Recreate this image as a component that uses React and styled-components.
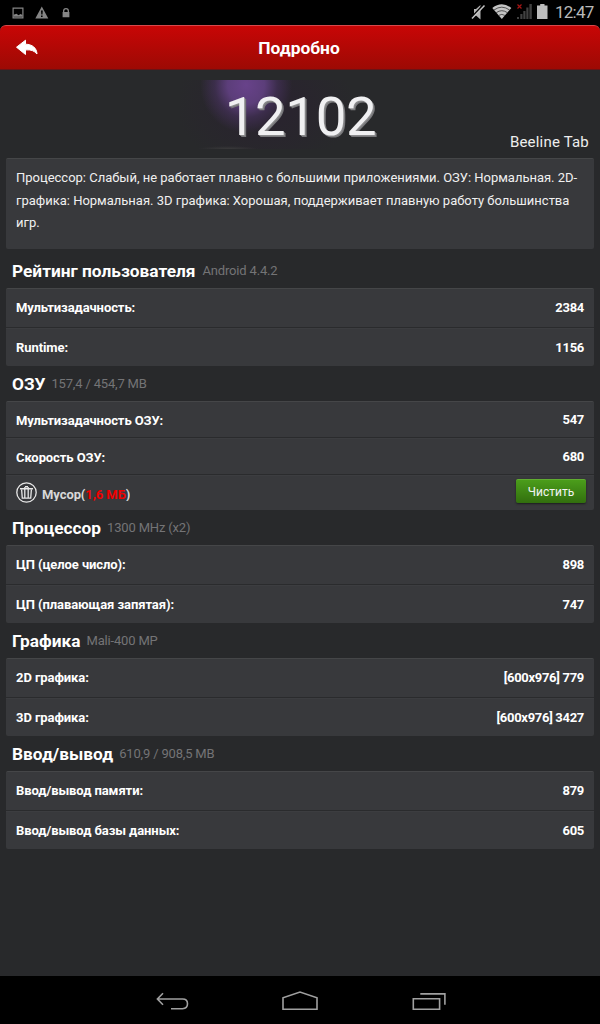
import styled, { createGlobalStyle } from 'styled-components';

const GlobalStyle = createGlobalStyle`
  * {
    box-sizing: border-box;
  }

  body {
    margin: 0;
    background: #28292b;
    font-family: Roboto, 'Noto Sans', sans-serif;
  }
`;

const Screen = styled.div`
  width: 600px;
  height: 1024px;
  display: flex;
  flex-direction: column;
  overflow: hidden;
  color: #fff;
  background: #28292b;
`;

const StatusBar = styled.div`
  height: 25px;
  flex: none;
  display: flex;
  justify-content: space-between;
  background: #000;
`;

const Clock = styled.span`
  font-size: 17px;
  line-height: 25px;
  letter-spacing: -0.75px;
  width: 45px;
  white-space: nowrap;
  color: #b9b9b9;
`;

const StatusRight = styled.div`
  display: flex;
`;

const HeaderWrap = styled.div`
  flex: none;
  background: #000;
`;

const Header = styled.header`
  height: 45px;
  display: grid;
  grid-template-columns: 54px 1fr 54px;
  align-items: center;
  border-top: 1px solid #d8484b;
  border-bottom: 1px solid #6b1315;
  border-radius: 6px 6px 0 0;
  background: linear-gradient(#c80606, #9d0a04);
`;

const Title = styled.h1`
  margin: 0;
  padding-right: 2px;
  font-size: 17.4px;
  font-weight: 700;
  text-align: center;
`;

const Main = styled.main`
  flex: 1;
  padding: 0 6px;
`;

const Hero = styled.div`
  height: 88px;
  padding-top: 10px;
  display: grid;
  grid-template-columns: 1fr 240px 1fr;
`;

const Glow = styled.div`
  height: 69px;
  text-align: center;
  background:
    radial-gradient(ellipse 30px 3px at 48px 69px, #3a3a3b, transparent),
    radial-gradient(ellipse 46px 48px at 66px 5px, #68428a 0, #5c3e7a 40%, rgba(75, 52, 100, 0.55) 68%, transparent 100%),
    radial-gradient(ellipse 90px 65px at 85px 25px, #29242e 30%, transparent 100%);
`;

const Score = styled.div`
  font-size: 54.5px;
  line-height: 72px;
  letter-spacing: -0.3px;
  padding-left: 1px;
  color: #f0f0f2;
  text-shadow: 1px 1px 0 #8b8b8d, 2px 2px 0 #77777a;
`;

const Device = styled.div`
  align-self: end;
  justify-self: end;
  padding-right: 5px;
  font-size: 15px;
  line-height: 18px;
  letter-spacing: 0.2px;
  margin-bottom: 7px;
  color: #eee;
`;

const Panel = styled.div`
  border-top: 1px solid #454648;
  border-radius: 2px;
  background: #38393c;
`;

const Summary = styled(Panel)`
  height: 91px;
  padding: 8px 10px;
  font-size: 13px;
  line-height: 22.7px;
  letter-spacing: -0.01px;
  white-space: nowrap;
  color: #f0f0f0;
`;

const SectionHead = styled.div`
  height: ${(props) => (props.$first ? 39 : 35)}px;
  padding: ${(props) => (props.$first ? 4 : 0)}px 6px 0;
  display: flex;
  align-items: center;
  gap: ${(props) => (props.$first ? 7 : 6)}px;
`;

const SectionTitle = styled.h2`
  margin: 0;
  font-size: 17.3px;
  font-weight: 700;
  line-height: 20px;
`;

const Detail = styled.span`
  font-size: 13px;
  line-height: 20px;
  letter-spacing: -0.17px;
  color: #747476;
`;

const Row = styled.div`
  height: ${(props) => (props.$compact ? 35 : 38)}px;
  padding: ${(props) => (props.$compact ? 1 : 0)}px 10px 0;
  display: flex;
  align-items: center;
  justify-content: space-between;

  &:not(:first-child) {
    height: ${(props) => (props.$compact ? 37 : 39)}px;
    padding-top: 2px;
    border-top: 1px solid #2a2b2d;
    box-shadow: inset 0 1px 0 #3c3d40;
  }
`;

const JunkRow = styled(Row)`
  &&:not(:first-child) {
    height: 36px;
    padding-top: 0;
  }
`;

const Label = styled.span`
  font-size: 13px;
  font-weight: 700;
  letter-spacing: -0.08px;
  line-height: ${(props) => (props.$cut ? 14 : 18)}px;
  height: ${(props) => (props.$cut ? 13 : 18)}px;
  overflow: ${(props) => (props.$cut ? 'hidden' : 'visible')};
  color: ${(props) => (props.$soft ? '#d8d8d8' : '#fff')};
`;

const Value = styled.span`
  font-size: 13px;
  font-weight: 700;
  line-height: 18px;
  letter-spacing: -0.3px;
`;

const Junk = styled.div`
  display: flex;
  align-items: center;
  gap: 5px;

  > ${Label} {
    margin-top: 3px;
  }
`;

const Size = styled.span`
  color: #f00000;
`;

const CleanButton = styled.button`
  width: 70px;
  height: 24px;
  margin: 0 -2px 3px 0;
  padding: 1px 0 0;
  border: 0;
  border-top: 1px solid #61ad31;
  border-radius: 2px;
  color: #f4f4f4;
  font: 12px/22px Roboto, sans-serif;
  background: linear-gradient(#4b9d1b, #326f0e);
  box-shadow: 0 1px 2px #1c1d1e;
`;

const NavBar = styled.nav`
  height: 48px;
  flex: none;
  background: #000;
`;

const sections = [
  {
    title: 'Рейтинг пользователя',
    detail: 'Android 4.4.2',
    rows: [['Мультизадачность:', '2384'], ['Runtime:', '1156']],
  },
  {
    title: 'ОЗУ',
    detail: '157,4 / 454,7 MB',
    compact: true,
    rows: [['Мультизадачность ОЗУ:', '547'], ['Скорость ОЗУ:', '680']],
  },
  {
    title: 'Процессор',
    detail: '1300 MHz (x2)',
    rows: [['ЦП (целое число):', '898'], ['ЦП (плавающая запятая):', '747']],
  },
  {
    title: 'Графика',
    detail: 'Mali-400 MP',
    rows: [['2D графика:', '[600x976] 779'], ['3D графика:', '[600x976] 3427']],
  },
  {
    title: 'Ввод/вывод',
    detail: '610,9 / 908,5 MB',
    rows: [['Ввод/вывод памяти:', '879'], ['Ввод/вывод базы данных:', '605']],
  },
];

function NoticeIcons() {
  return (
    <svg width="80" height="25" viewBox="0 0 80 25" fill="#858585">
      <path fillRule="evenodd" d="M12.5 7.5h11v11h-11zM13.7 8.7v8.6h8.6V8.7z" />
      <path d="M13.5 16.8v-2l3-1 2 1.4 2-1.2 2 1v1.8z" />
      <path fillRule="evenodd" d="M41.8 6.5 48.3 18.5h-13zM41 10.5l.3 4h1.2l.3-4zM41 15.5v1.6h1.6v-1.6z" />
      <path fillRule="evenodd" d="M63 12v-1a3 3 0 0 1 6 0v1h.4v5.2h-6.8V12zm1.3 0h3.4v-1a1.7 1.7 0 0 0-3.4 0z" />
    </svg>
  );
}

function SystemIcons() {
  return (
    <svg width="85" height="25" viewBox="470 0 85 25">
      <path d="M474 9h2l4.5-4v14.5l-4.5-4h-2z" fill="#b4b4b4" />
      <path d="M471.5 17.5 483.5 4.5" stroke="#000" strokeWidth="1.8" />
      <path d="M472 18.5 484.5 5.5" stroke="#c4c4c4" strokeWidth="1.5" />
      <path d="M501.8 19 492.3 8q9.5-7.5 19 0z" fill="#c4c4c4" />
      <path
        d="M494 10q7.8-5.6 15.6 0M496.2 12.7q5.6-4 11.2 0M498.7 15.4q3.1-2 6.2 0"
        fill="none"
        stroke="#333"
        strokeWidth=".8"
      />
      <g fill="#414141">
        <path d="M517 17h2v2h-2zM520.3 14h2.2v5h-2.2zM523.3 11h2.2v8h-2.2zM526.3 7.5h2.2V19h-2.2zM529.4 4h2.4v15h-2.4z" />
      </g>
      <path d="m517.5 4.5 4 4m0-4-4 4" stroke="#a51515" strokeWidth="1.2" />
      <path d="M537 5.5h3.2V4h4.3v1.5h3V19H537z" fill="#bdbdbd" />
    </svg>
  );
}

function BackArrow() {
  return (
    <svg width="54" height="43" viewBox="0 0 54 43" fill="#fff">
      <path d="m16.5 21.2 9-7v4c7 .2 11.2 3.8 11.5 9.8-2.8-3.2-5.8-4.5-11.5-4.1v4.6z" stroke="#fff" strokeLinejoin="round" />
    </svg>
  );
}

function TrashIcon() {
  return (
    <svg width="21" height="21" viewBox="0 0 21 21" fill="none" stroke="#e8e8e8">
      <circle cx="10.5" cy="10.5" r="9.7" strokeWidth="1.3" />
      <path d="M4 6.7h13M9 4.8h3" strokeWidth="1.4" />
      <path d="M5.6 7.5l.7 8.7h8.4l.7-8.7" strokeWidth="1.3" />
      <path d="M8.8 5v11M12.2 5v11" strokeWidth="1.3" />
    </svg>
  );
}

function NavIcons() {
  return (
    <svg width="600" height="48" viewBox="0 976 600 48" fill="none" stroke="#a0a0a0" strokeWidth="1.6">
      <path d="M171 1008.7h11.5q5 0 5-4.9t-5-4.8H158M163 993.3l-5.6 5.7 5.6 5.7" />
      <path d="M283 1009.2v-11.4l17-5.7 17 5.7v11.4z" />
      <path d="M413.3 998.8h26.3v10.4h-26.3zM420.3 993.9h24.6v10.9" />
    </svg>
  );
}

function App() {
  return (
    <Screen>
      <GlobalStyle />
      <StatusBar>
        <NoticeIcons />
        <StatusRight>
          <SystemIcons />
          <Clock>12:47</Clock>
        </StatusRight>
      </StatusBar>
      <HeaderWrap>
        <Header>
          <BackArrow />
          <Title>Подробно</Title>
        </Header>
      </HeaderWrap>
      <Main>
        <Hero>
          <span />
          <Glow>
            <Score>12102</Score>
          </Glow>
          <Device>Beeline Tab</Device>
        </Hero>
        <Summary>
          Процессор: Слабый, не работает плавно с большими приложениями. ОЗУ: Нормальная. 2D-
          <br />
          графика: Нормальная. 3D графика: Хорошая, поддерживает плавную работу большинства
          <br />
          игр.
        </Summary>
        {sections.map((section, i) => (
          <section key={section.title}>
            <SectionHead $first={i === 0}>
              <SectionTitle>{section.title}</SectionTitle>
              <Detail>{section.detail}</Detail>
            </SectionHead>
            <Panel>
              {section.rows.map(([label, value]) => (
                <Row key={label} $compact={section.compact}>
                  <Label $cut={section.compact}>{label}</Label>
                  <Value>{value}</Value>
                </Row>
              ))}
              {section.compact && (
                <JunkRow>
                  <Junk>
                    <TrashIcon />
                    <Label $cut $soft>
                      Мусор(<Size>1,6 МБ</Size>)
                    </Label>
                  </Junk>
                  <CleanButton>Чистить</CleanButton>
                </JunkRow>
              )}
            </Panel>
          </section>
        ))}
      </Main>
      <NavBar>
        <NavIcons />
      </NavBar>
    </Screen>
  );
}

export default App;
